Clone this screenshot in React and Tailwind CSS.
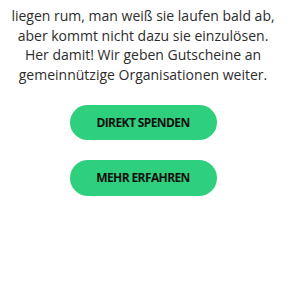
export default function App() {
  return (
    <div className="w-[300px] h-[300px] bg-white overflow-hidden">
      <div className="w-[286px] flex flex-col items-center pt-[6px]">
        <p className="text-center whitespace-nowrap text-[14px] leading-[19.5px] text-[#2d2d2d] font-['Open_Sans',sans-serif]">
          liegen rum, man weiß sie laufen bald ab,<br />
          aber kommt nicht dazu sie einzulösen.<br />
          Her damit! Wir geben Gutscheine an<br />
          gemeinnützige Organisationen weiter.
        </p>
        <button className="mt-[21px] w-[147px] h-[35px] rounded-full bg-[#2ecf7d] text-[12px] font-bold text-[#111] font-['Open_Sans',sans-serif] tracking-[-0.6px]">
          DIREKT SPENDEN
        </button>
        <button className="mt-[20px] w-[147px] h-[36px] rounded-full bg-[#2ecf7d] text-[12px] font-bold text-[#111] font-['Open_Sans',sans-serif] tracking-[-0.6px]">
          MEHR ERFAHREN
        </button>
      </div>
    </div>
  );
}
